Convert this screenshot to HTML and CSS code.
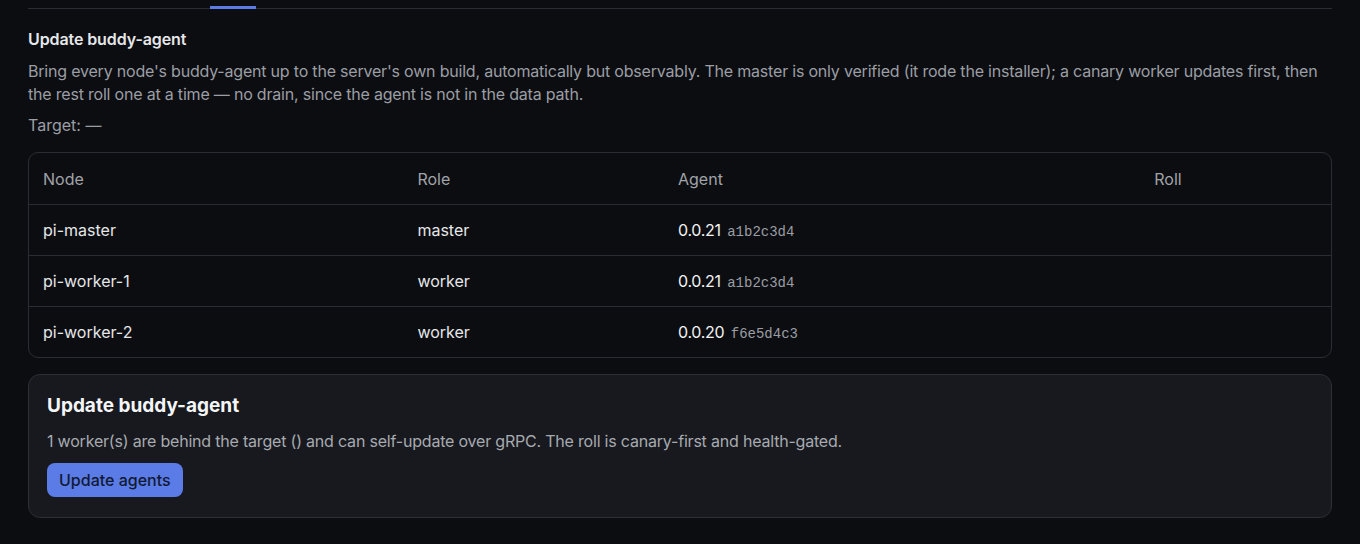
FILE: index.html
```html
<!DOCTYPE html>
<html>
<head>
  <meta charset='utf-8'>
  <title>Agents</title>
  <meta name='viewport' content='width=device-width, initial-scale=1'>
  <link rel="stylesheet" href="styles.css">
</head>

<body>
  <div class="page">
    <!-- tab strip, scrolled out of view except for its bottom edge -->
    <nav class="tabs">
      <span class="tab"></span>
      <span class="tab"></span>
      <span class="tab active"></span>
    </nav>

    <section class="section">
      <h2 class="section-title">Update buddy-agent</h2>
      <p class="lead">Bring every node's buddy-agent up to the server's own build, automatically but observably. The master is only verified (it rode the installer); a canary worker updates first, then the rest roll one at a time — no drain, since the agent is not in the data path.</p>
      <p class="target">Target: —</p>

      <div class="table">
        <div class="row head">
          <div>Node</div>
          <div>Role</div>
          <div>Agent</div>
          <div>Roll</div>
        </div>
        <div class="row">
          <div>pi-master</div>
          <div>master</div>
          <div><span class="ver">0.0.21</span> <code class="sha">a1b2c3d4</code></div>
          <div></div>
        </div>
        <div class="row">
          <div>pi-worker-1</div>
          <div>worker</div>
          <div><span class="ver">0.0.21</span> <code class="sha">a1b2c3d4</code></div>
          <div></div>
        </div>
        <div class="row">
          <div>pi-worker-2</div>
          <div>worker</div>
          <div><span class="ver">0.0.20</span> <code class="sha">f6e5d4c3</code></div>
          <div></div>
        </div>
      </div>

      <div class="card">
        <h3 class="card-title">Update buddy-agent</h3>
        <p class="card-text">1 worker(s) are behind the target () and can self-update over gRPC. The roll is canary-first and health-gated.</p>
        <button class="btn">Update agents</button>
      </div>
    </section>
  </div>
</body>
</html>
```

FILE: styles.css
```css
html, body {
  margin: 0;
  background-color: #0c0d10;
  color: #e6e7ea;
  font-family: Inter, "Noto Sans", sans-serif;
  font-size: 16px;
}

.page {
  padding: 0 28px;
}

.tabs {
  display: flex;
  gap: 45px;
  height: 8px;
  border-bottom: 1px solid #2a2d33;
}

.tab {
  width: 46px;
  box-sizing: border-box;
}

.tab.active {
  border-bottom: 3px solid #5b7be6;
  margin-bottom: -1px;
}

.section-title {
  margin: 18px 0 0;
  font-size: 16px;
  font-weight: 600;
  line-height: 24px;
  letter-spacing: -0.1px;
}

.lead {
  margin: 9px 0 0;
  color: #9b9ea5;
  line-height: 23px;
  letter-spacing: -0.2px;
}

.target {
  margin: 8px 0 0;
  color: #9b9ea5;
  line-height: 23px;
}

.table {
  margin-top: 15px;
  border: 1px solid #2a2d33;
  border-radius: 10px;
  overflow: hidden;
}

.row {
  display: grid;
  grid-template-columns: 375fr 261fr 477fr 191fr;
  align-items: center;
  height: 51px;
  box-sizing: border-box;
  border-top: 1px solid #2a2d33;
}

.row:first-child {
  border-top: none;
}

.row > div {
  padding: 0 14px;
}

.row.head {
  color: #a0a3a9;
}

.ver {
  color: #f2f3f5;
  letter-spacing: -0.3px;
}

.sha {
  margin-left: 2px;
  font-family: "Liberation Mono", "DejaVu Sans Mono", monospace;
  font-size: 14px;
  color: #9a9da4;
}

.card {
  margin-top: 16px;
  padding: 18px 18px 20px;
  background-color: #17191e;
  border: 1px solid #2c2f36;
  border-radius: 12px;
}

.card-title {
  margin: 0;
  font-size: 19px;
  font-weight: 700;
  line-height: 26px;
  color: #f4f5f7;
}

.card-text {
  margin: 11px 0 0;
  color: #a7aab0;
  line-height: 23px;
  letter-spacing: -0.2px;
}

.btn {
  margin-top: 10px;
  height: 34px;
  padding: 0 12px;
  border: none;
  border-radius: 8px;
  background-color: #5b7be6;
  color: #101a33;
  font-family: Inter, "Noto Sans", sans-serif;
  font-size: 16px;
  font-weight: 500;
}
```
